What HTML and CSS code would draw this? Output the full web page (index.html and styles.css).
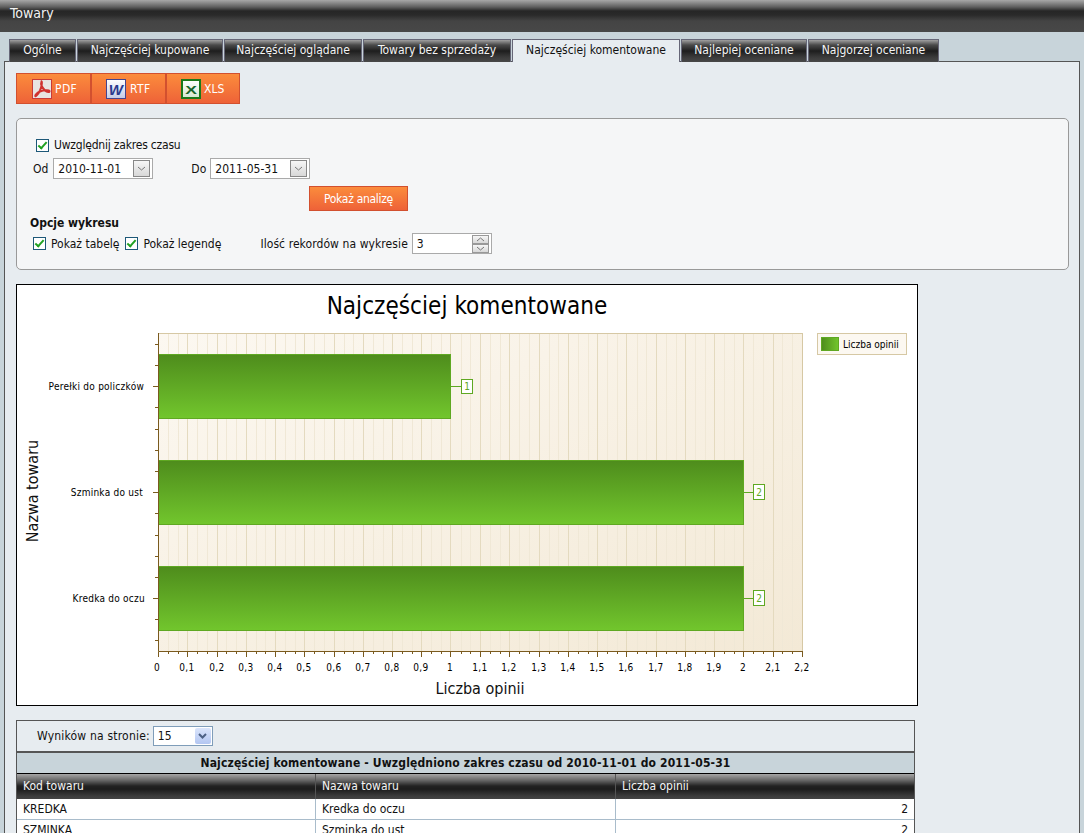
FILE: index.html
```html
<!DOCTYPE html>
<html lang="pl">
<head>
    <meta charset="UTF-8">
    <meta name="viewport" content="width=device-width, initial-scale=1.0">
    <title>Towary</title>
    <link rel="stylesheet" href="styles.css">
</head>
<body>

    <div class="page-header">Towary</div>

    <div class="tab-bar">
        <a class="tab tab-1">Ogólne</a>
        <a class="tab tab-2">Najczęściej kupowane</a>
        <a class="tab tab-3">Najczęściej oglądane</a>
        <a class="tab tab-4">Towary bez sprzedaży</a>
        <a class="tab tab-5 active">Najczęściej komentowane</a>
        <a class="tab tab-6">Najlepiej oceniane</a>
        <a class="tab tab-7">Najgorzej oceniane</a>
    </div>

    <div class="panel">
        <div class="export-bar">
            <a class="export-btn">
                <svg class="export-icon" viewBox="0 0 20 20">
                    <rect class="pdf-box" x="0.5" y="0.5" width="19" height="19"/>
                    <path class="pdf-mark" d="M9.5 2.5 C8.5 5 10.5 9 13 11.5 C15 13.5 18 13.5 17.5 12 C17 10.8 12 11 8 12.5 C5.5 13.5 3 16 3.2 17 C3.5 18 6 15.5 8 11.5 C9.5 8 10.5 3 9.5 2.5 Z"/>
                </svg>
                <span>PDF</span>
            </a>
            <a class="export-btn">
                <svg class="export-icon" viewBox="0 0 20 20">
                    <defs>
                        <linearGradient id="word-bg" x1="0" y1="0" x2="0" y2="1">
                            <stop offset="0" stop-color="#ffffff"/>
                            <stop offset="1" stop-color="#c4cbe6"/>
                        </linearGradient>
                    </defs>
                    <rect class="word-box" x="0.5" y="0.5" width="19" height="19"/>
                    <text class="word-mark" x="10" y="15.5" text-anchor="middle">W</text>
                </svg>
                <span>RTF</span>
            </a>
            <a class="export-btn">
                <svg class="export-icon" viewBox="0 0 20 20">
                    <defs>
                        <linearGradient id="excel-bg" x1="0" y1="0" x2="0" y2="1">
                            <stop offset="0" stop-color="#ffffff"/>
                            <stop offset="1" stop-color="#d4e8d0"/>
                        </linearGradient>
                    </defs>
                    <rect class="excel-box" x="1" y="1" width="18" height="18"/>
                    <text class="excel-mark" text-anchor="middle" transform="translate(10 14.5) scale(1.35 0.85)">X</text>
                </svg>
                <span>XLS</span>
            </a>
        </div>

        <div class="filter-box">
            <div class="range-check">
                <span class="check"></span>
                <span class="range-label">Uwzględnij zakres czasu</span>
            </div>
            <div class="date-row">
                <span>Od</span>
                <div class="combo">
                    <span>2010-11-01</span>
                    <span class="combo-btn"><svg viewBox="0 0 9 5"><path d="M1 1 L4.5 4 L8 1"/></svg></span>
                </div>
                <span class="date-label-to">Do</span>
                <div class="combo">
                    <span>2011-05-31</span>
                    <span class="combo-btn"><svg viewBox="0 0 9 5"><path d="M1 1 L4.5 4 L8 1"/></svg></span>
                </div>
            </div>
            <button class="show-btn">Pokaż analizę</button>
            <div class="options-title">Opcje wykresu</div>
            <div class="options-row">
                <span class="check"></span>
                <span class="option-label">Pokaż tabelę</span>
                <span class="check"></span>
                <span class="option-label">Pokaż legendę</span>
                <span class="records-label">Ilość rekordów na wykresie</span>
                <div class="spinner">
                    <span>3</span>
                    <span class="spinner-btns">
                        <span class="spin"><svg viewBox="0 0 9 5"><path d="M1 4 L4.5 1 L8 4"/></svg></span>
                        <span class="spin"><svg viewBox="0 0 9 5"><path d="M1 1 L4.5 4 L8 1"/></svg></span>
                    </span>
                </div>
            </div>
        </div>

        <div class="chart-frame">
            <svg class="chart" width="900" height="420" viewBox="17 285 900 420">
                <defs>
                    <linearGradient id="plot-bg" x1="0" y1="0" x2="1" y2="1">
                        <stop offset="0" stop-color="#fcf8f1"/>
                        <stop offset="1" stop-color="#f3e9d6"/>
                    </linearGradient>
                    <linearGradient id="bar-fill" x1="0" y1="0" x2="0" y2="1">
                        <stop offset="0" stop-color="#4e8c1c"/>
                        <stop offset="1" stop-color="#72c62d"/>
                    </linearGradient>
                    <linearGradient id="swatch-fill" x1="0" y1="0" x2="1" y2="0">
                        <stop offset="0" stop-color="#4e8c1c"/>
                        <stop offset="1" stop-color="#72c62d"/>
                    </linearGradient>
                </defs>

                <text class="chart-title" x="467" y="314" text-anchor="middle">Najczęściej komentowane</text>

                <rect class="plot" x="158.5" y="333.5" width="644" height="318"/>
                <path class="grid-minor" d="M168.5 334V651M178.5 334V651M197.5 334V651M207.5 334V651M226.5 334V651M236.5 334V651M256.5 334V651M265.5 334V651M285.5 334V651M295.5 334V651M314.5 334V651M324.5 334V651M344.5 334V651M353.5 334V651M373.5 334V651M383.5 334V651M402.5 334V651M412.5 334V651M431.5 334V651M441.5 334V651M461.5 334V651M470.5 334V651M490.5 334V651M500.5 334V651M519.5 334V651M529.5 334V651M549.5 334V651M558.5 334V651M578.5 334V651M588.5 334V651M607.5 334V651M617.5 334V651M637.5 334V651M646.5 334V651M666.5 334V651M676.5 334V651M695.5 334V651M705.5 334V651M724.5 334V651M734.5 334V651M753.5 334V651M763.5 334V651M782.5 334V651M792.5 334V651"/>
                <path class="grid-major" d="M187.5 334V651M217.5 334V651M246.5 334V651M275.5 334V651M304.5 334V651M334.5 334V651M363.5 334V651M392.5 334V651M421.5 334V651M450.5 334V651M480.5 334V651M509.5 334V651M539.5 334V651M568.5 334V651M597.5 334V651M626.5 334V651M656.5 334V651M685.5 334V651M714.5 334V651M743.5 334V651M773.5 334V651"/>

                <rect class="bar" x="158.5" y="354.5" width="292" height="64"/>
                <rect class="bar" x="158.5" y="460.5" width="585" height="64"/>
                <rect class="bar" x="158.5" y="566.5" width="585" height="64"/>

                <path class="bar-link" d="M451 386.5H461M744 492.5H753M744 598.5H753"/>
                <rect class="bar-label-box" x="461.5" y="379.5" width="11" height="14"/>
                <rect class="bar-label-box" x="753.5" y="484.5" width="11" height="15"/>
                <rect class="bar-label-box" x="753.5" y="590.5" width="11" height="15"/>
                <text class="bar-label" x="467" y="390" text-anchor="middle">1</text>
                <text class="bar-label" x="759" y="496" text-anchor="middle">2</text>
                <text class="bar-label" x="759" y="602" text-anchor="middle">2</text>

                <path class="axis" d="M158.5 333V651.5H803"/>
                <path class="axis" d="M158 344.5H155M158 365.5H155M158 386.5H153M158 407.5H155M158 429.5H155M158 450.5H155M158 471.5H155M158 492.5H153M158 513.5H155M158 535.5H155M158 556.5H155M158 577.5H155M158 598.5H153M158 619.5H155M158 640.5H155"/>
                <path class="axis" d="M158.5 652V657M187.5 652V657M217.5 652V657M246.5 652V657M275.5 652V657M304.5 652V657M334.5 652V657M363.5 652V657M392.5 652V657M421.5 652V657M450.5 652V657M480.5 652V657M509.5 652V657M539.5 652V657M568.5 652V657M597.5 652V657M626.5 652V657M656.5 652V657M685.5 652V657M714.5 652V657M743.5 652V657M773.5 652V657M802.5 652V657"/>
                <path class="axis" d="M168.5 652V654M178.5 652V654M197.5 652V654M207.5 652V654M226.5 652V654M236.5 652V654M256.5 652V654M265.5 652V654M285.5 652V654M295.5 652V654M314.5 652V654M324.5 652V654M344.5 652V654M353.5 652V654M373.5 652V654M383.5 652V654M402.5 652V654M412.5 652V654M431.5 652V654M441.5 652V654M461.5 652V654M470.5 652V654M490.5 652V654M500.5 652V654M519.5 652V654M529.5 652V654M549.5 652V654M558.5 652V654M578.5 652V654M588.5 652V654M607.5 652V654M617.5 652V654M637.5 652V654M646.5 652V654M666.5 652V654M676.5 652V654M695.5 652V654M705.5 652V654M724.5 652V654M734.5 652V654M753.5 652V654M763.5 652V654M782.5 652V654M792.5 652V654"/>

                <text class="tick-label category" x="144" y="390" text-anchor="end">Perełki do policzków</text>
                <text class="tick-label category" x="143" y="496" text-anchor="end">Szminka do ust</text>
                <text class="tick-label category" x="145" y="602" text-anchor="end">Kredka do oczu</text>

                <g text-anchor="middle">
                    <text class="tick-label value" x="157" y="671">0</text>
                    <text class="tick-label value" x="187" y="671">0,1</text>
                    <text class="tick-label value" x="217" y="671">0,2</text>
                    <text class="tick-label value" x="246" y="671">0,3</text>
                    <text class="tick-label value" x="275" y="671">0,4</text>
                    <text class="tick-label value" x="304" y="671">0,5</text>
                    <text class="tick-label value" x="334" y="671">0,6</text>
                    <text class="tick-label value" x="363" y="671">0,7</text>
                    <text class="tick-label value" x="392" y="671">0,8</text>
                    <text class="tick-label value" x="421" y="671">0,9</text>
                    <text class="tick-label value" x="450" y="671">1</text>
                    <text class="tick-label value" x="480" y="671">1,1</text>
                    <text class="tick-label value" x="509" y="671">1,2</text>
                    <text class="tick-label value" x="539" y="671">1,3</text>
                    <text class="tick-label value" x="568" y="671">1,4</text>
                    <text class="tick-label value" x="597" y="671">1,5</text>
                    <text class="tick-label value" x="626" y="671">1,6</text>
                    <text class="tick-label value" x="656" y="671">1,7</text>
                    <text class="tick-label value" x="685" y="671">1,8</text>
                    <text class="tick-label value" x="714" y="671">1,9</text>
                    <text class="tick-label value" x="743" y="671">2</text>
                    <text class="tick-label value" x="773" y="671">2,1</text>
                    <text class="tick-label value" x="802" y="671">2,2</text>
                </g>

                <text class="axis-title" x="480" y="694" text-anchor="middle">Liczba opinii</text>
                <text class="axis-title" x="0" y="0" text-anchor="middle" transform="translate(38 491) rotate(-90)">Nazwa towaru</text>

                <rect class="legend-box" x="817.5" y="333.5" width="89" height="21"/>
                <rect class="legend-swatch" x="821.5" y="337.5" width="17" height="13"/>
                <text class="tick-label" x="843" y="348">Liczba opinii</text>
            </svg>
        </div>

        <div class="grid-box">
            <div class="grid-pager">
                <span class="pager-label">Wyników na stronie:</span>
                <div class="page-size">
                    <span>15</span>
                    <span class="page-size-btn"><svg viewBox="0 0 9 6"><path d="M1 1 L4.5 4.5 L8 1"/></svg></span>
                </div>
            </div>
            <div class="grid-caption">Najczęściej komentowane - Uwzględniono zakres czasu od 2010-11-01 do 2011-05-31</div>
            <table class="grid">
                <thead>
                    <tr>
                        <th class="col-code">Kod towaru</th>
                        <th class="col-name">Nazwa towaru</th>
                        <th>Liczba opinii</th>
                    </tr>
                </thead>
                <tbody>
                    <tr>
                        <td>KREDKA</td>
                        <td>Kredka do oczu</td>
                        <td class="num">2</td>
                    </tr>
                    <tr>
                        <td>SZMINKA</td>
                        <td>Szminka do ust</td>
                        <td class="num">2</td>
                    </tr>
                </tbody>
            </table>
        </div>
    </div>

</body>
</html>
```

FILE: styles.css
```css
html, body {
    height: 100%;
    overflow: hidden;
}

body {
    margin: 0;
    font-family: "DejaVu Sans Condensed", "DejaVu Sans", sans-serif;
    font-stretch: condensed;
    font-size: 12px;
    color: #111;
    background-color: #c8d4da;
}

.page-header {
    height: 32px;
    box-sizing: border-box;
    padding: 5px 0 0 10px;
    font-size: 14px;
    line-height: 16px;
    color: #f2f2f2;
    background: linear-gradient(to bottom, #a8a8a8 0, #5e5e5e 7px, #262626 11px, #2a2a2a 15px, #444 21px, #484848 32px);
}

.tab-bar {
    display: flex;
    height: 30px;
    box-sizing: border-box;
    padding: 7px 0 0 9px;
    gap: 1px;
    position: relative;
}

.tab {
    box-sizing: border-box;
    height: 23px;
    line-height: 21px;
    text-align: center;
    color: #f4f4f4;
    border: 1px solid #667;
    border-bottom: none;
    background: linear-gradient(to bottom, #a0a0a0 0, #4a4a4a 5px, #1e1e1e 11px, #3a3a3a 17px, #484848 100%);
}

.tab.active {
    color: #111;
    background: #e7ecf0;
    position: relative;
    z-index: 1;
}

.tab-1 { width: 67px; }
.tab-2 { width: 146px; }
.tab-3 { width: 138px; }
.tab-4 { width: 148px; }
.tab-5 { width: 168px; }
.tab-6 { width: 126px; }
.tab-7 { width: 131px; }

.panel {
    margin: -1px 4px 0 4px;
    height: 900px;
    padding: 11px 11px 0 11px;
    border: 1px solid #555;
    background-color: #e7ecf0;
}

.export-bar {
    display: flex;
    width: 224px;
    height: 31px;
    box-sizing: border-box;
    border: 1px solid #d2502f;
    background: linear-gradient(to bottom, #fb8c3c, #ee6238);
}

.export-btn {
    display: flex;
    align-items: center;
    width: 75px;
    box-sizing: border-box;
    padding-left: 14px;
    gap: 4px;
    letter-spacing: 0.4px;
    color: #fff;
    border-right: 2px solid #d2502f;
}

.export-btn:first-child {
    padding-left: 15px;
    gap: 3px;
}

.export-btn:last-child {
    flex: 1;
    gap: 3px;
    letter-spacing: 0;
    border-right: none;
}

.export-icon {
    width: 20px;
    height: 20px;
}

.pdf-box {
    fill: #e8e4e2;
    stroke: #c93a38;
}

.pdf-mark {
    fill: none;
    stroke: #d0322f;
    stroke-width: 2;
}

.word-box {
    fill: url(#word-bg);
    stroke: #44448e;
}

.word-mark {
    font-family: "Liberation Sans", sans-serif;
    font-size: 15px;
    font-weight: bold;
    font-style: italic;
    fill: #2a3a8e;
}

.excel-box {
    fill: url(#excel-bg);
    stroke: #1a7a1a;
    stroke-width: 2;
}

.excel-mark {
    font-family: "Liberation Sans", sans-serif;
    font-size: 13px;
    font-weight: bold;
    fill: #17662a;
}

.filter-box {
    margin-top: 14px;
    width: 1053px;
    height: 152px;
    box-sizing: border-box;
    padding: 19px 0 0 13px;
    border: 1px solid #999;
    border-radius: 5px;
    background-color: #f5f6f7;
}

.range-check {
    display: flex;
    align-items: center;
    gap: 5px;
    padding-left: 6px;
    height: 14px;
}

.range-label {
    letter-spacing: -0.2px;
}

.check {
    display: inline-block;
    box-sizing: border-box;
    width: 13px;
    height: 13px;
    border: 1px solid #1d5878;
    background-color: #fff;
    position: relative;
}

.check::after {
    content: "";
    position: absolute;
    left: 3px;
    top: 0;
    width: 3px;
    height: 7px;
    border: solid #21a121;
    border-width: 0 2px 2px 0;
    transform: rotate(42deg);
}

.date-row {
    display: flex;
    align-items: center;
    margin: 6px 0 0 3px;
    height: 21px;
}

.combo {
    display: flex;
    align-items: center;
    justify-content: space-between;
    box-sizing: border-box;
    width: 100px;
    height: 21px;
    margin-left: 5px;
    padding: 0 2px 0 4px;
    border: 1px solid #aaa;
    background-color: #fff;
}

.combo-btn {
    display: flex;
    align-items: center;
    justify-content: center;
    box-sizing: border-box;
    width: 17px;
    height: 17px;
    border: 1px solid #888;
    background: linear-gradient(to bottom, #f6f6f6, #d8d8d8);
}

.combo-btn svg,
.spin svg {
    width: 9px;
    height: 5px;
}

.combo-btn path,
.spin path {
    fill: none;
    stroke: #777;
}

.date-label-to {
    margin: 0 -1px 0 38px;
}

.show-btn {
    display: block;
    box-sizing: border-box;
    width: 99px;
    height: 25px;
    margin: 7px 0 0 279px;
    padding: 0;
    font: inherit;
    letter-spacing: -0.3px;
    color: #fff;
    border: 1px solid #d2502f;
    background: linear-gradient(to bottom, #fb8c3c, #ee6238);
}

.options-title {
    margin-top: 5px;
    font-weight: bold;
    line-height: 15px;
}

.options-row {
    display: flex;
    align-items: center;
    margin: 2px 0 0 3px;
    height: 21px;
}

.option-label {
    margin: 0 6px 0 5px;
}

.records-label {
    margin-left: 33px;
    letter-spacing: 0.08px;
}

.spinner {
    display: flex;
    align-items: center;
    justify-content: space-between;
    box-sizing: border-box;
    width: 80px;
    height: 21px;
    margin-left: 4px;
    padding: 0 2px 0 4px;
    border: 1px solid #aaa;
    background-color: #fff;
}

.spinner-btns {
    display: flex;
    flex-direction: column;
}

.spin {
    display: flex;
    align-items: center;
    justify-content: center;
    box-sizing: border-box;
    width: 17px;
    height: 9px;
    border: 1px solid #999;
    background: linear-gradient(to bottom, #f6f6f6, #d8d8d8);
}

.chart-frame {
    margin-top: 14px;
    width: 900px;
    height: 420px;
    border: 1px solid #000;
    background-color: #fff;
}

.chart {
    display: block;
}

.chart-title {
    font-size: 24px;
    letter-spacing: 0.05px;
    fill: #000;
}

.axis-title {
    font-size: 16px;
    fill: #111;
}

.tick-label {
    font-size: 10px;
    fill: #000;
}

.tick-label.category {
    letter-spacing: 0.25px;
}

.tick-label.value {
    letter-spacing: 0.4px;
}

.plot {
    fill: url(#plot-bg);
    stroke: #d6c8a4;
}

.grid-minor {
    stroke: #f0e8d6;
    fill: none;
}

.grid-major {
    stroke: #e4dabf;
    fill: none;
}

.bar {
    fill: url(#bar-fill);
    stroke: #5fa822;
}

.bar-link {
    stroke: #5fa822;
    fill: none;
}

.bar-label-box {
    fill: #fff;
    stroke: #5fa822;
}

.bar-label {
    font-size: 10px;
    fill: #5fa822;
}

.axis {
    stroke: #7a5a1e;
    fill: none;
}

.legend-box {
    fill: #fcf8f1;
    stroke: #d6c8a4;
}

.legend-swatch {
    fill: url(#swatch-fill);
    stroke: #5fa822;
}

.grid-box {
    margin-top: 14px;
    width: 899px;
    box-sizing: border-box;
    border: 1px solid #555;
    border-bottom: none;
}

.grid-pager {
    display: flex;
    align-items: center;
    height: 32px;
    box-sizing: border-box;
    padding-left: 20px;
    gap: 3px;
    border-bottom: 2px solid #555;
}

.pager-label {
    letter-spacing: 0.2px;
}

.page-size {
    display: flex;
    align-items: center;
    justify-content: space-between;
    box-sizing: border-box;
    width: 60px;
    height: 20px;
    padding: 0 1px 0 4px;
    border: 1px solid #7f9db9;
    background-color: #fff;
}

.page-size-btn {
    display: flex;
    align-items: center;
    justify-content: center;
    width: 16px;
    height: 16px;
    border-radius: 2px;
    background: linear-gradient(to bottom, #dbe5fb, #b3c6f2);
}

.page-size-btn svg {
    width: 9px;
    height: 6px;
}

.page-size-btn path {
    fill: none;
    stroke: #4d6185;
    stroke-width: 2;
}

.grid-caption {
    height: 21px;
    line-height: 20px;
    text-align: center;
    font-weight: bold;
    letter-spacing: 0.14px;
    background-color: #c8d4da;
    border-bottom: 1px solid #000;
    box-sizing: border-box;
}

.grid {
    width: 100%;
    table-layout: fixed;
    border-collapse: separate;
    border-spacing: 0;
    background-color: #fff;
}

.col-code { width: 299px; }
.col-name { width: 300px; }

.grid th {
    height: 25px;
    box-sizing: border-box;
    padding: 0 6px 1px;
    text-align: left;
    font-weight: normal;
    color: #f4f4f4;
    border-right: 1px solid #555;
    background: linear-gradient(to bottom, #a6a6a6 0, #6a6a6a 6px, #222 12px, #1c1c1c 15px, #3c3c3c 22px, #444 100%);
}

.grid th:last-child {
    border-right: none;
}

.grid td {
    height: 21px;
    box-sizing: border-box;
    padding: 0 6px;
    border-right: 1px solid #a9bccb;
    border-bottom: 1px solid #a9bccb;
}

.grid td:last-child {
    border-right: none;
}

.grid .num {
    text-align: right;
}
```
